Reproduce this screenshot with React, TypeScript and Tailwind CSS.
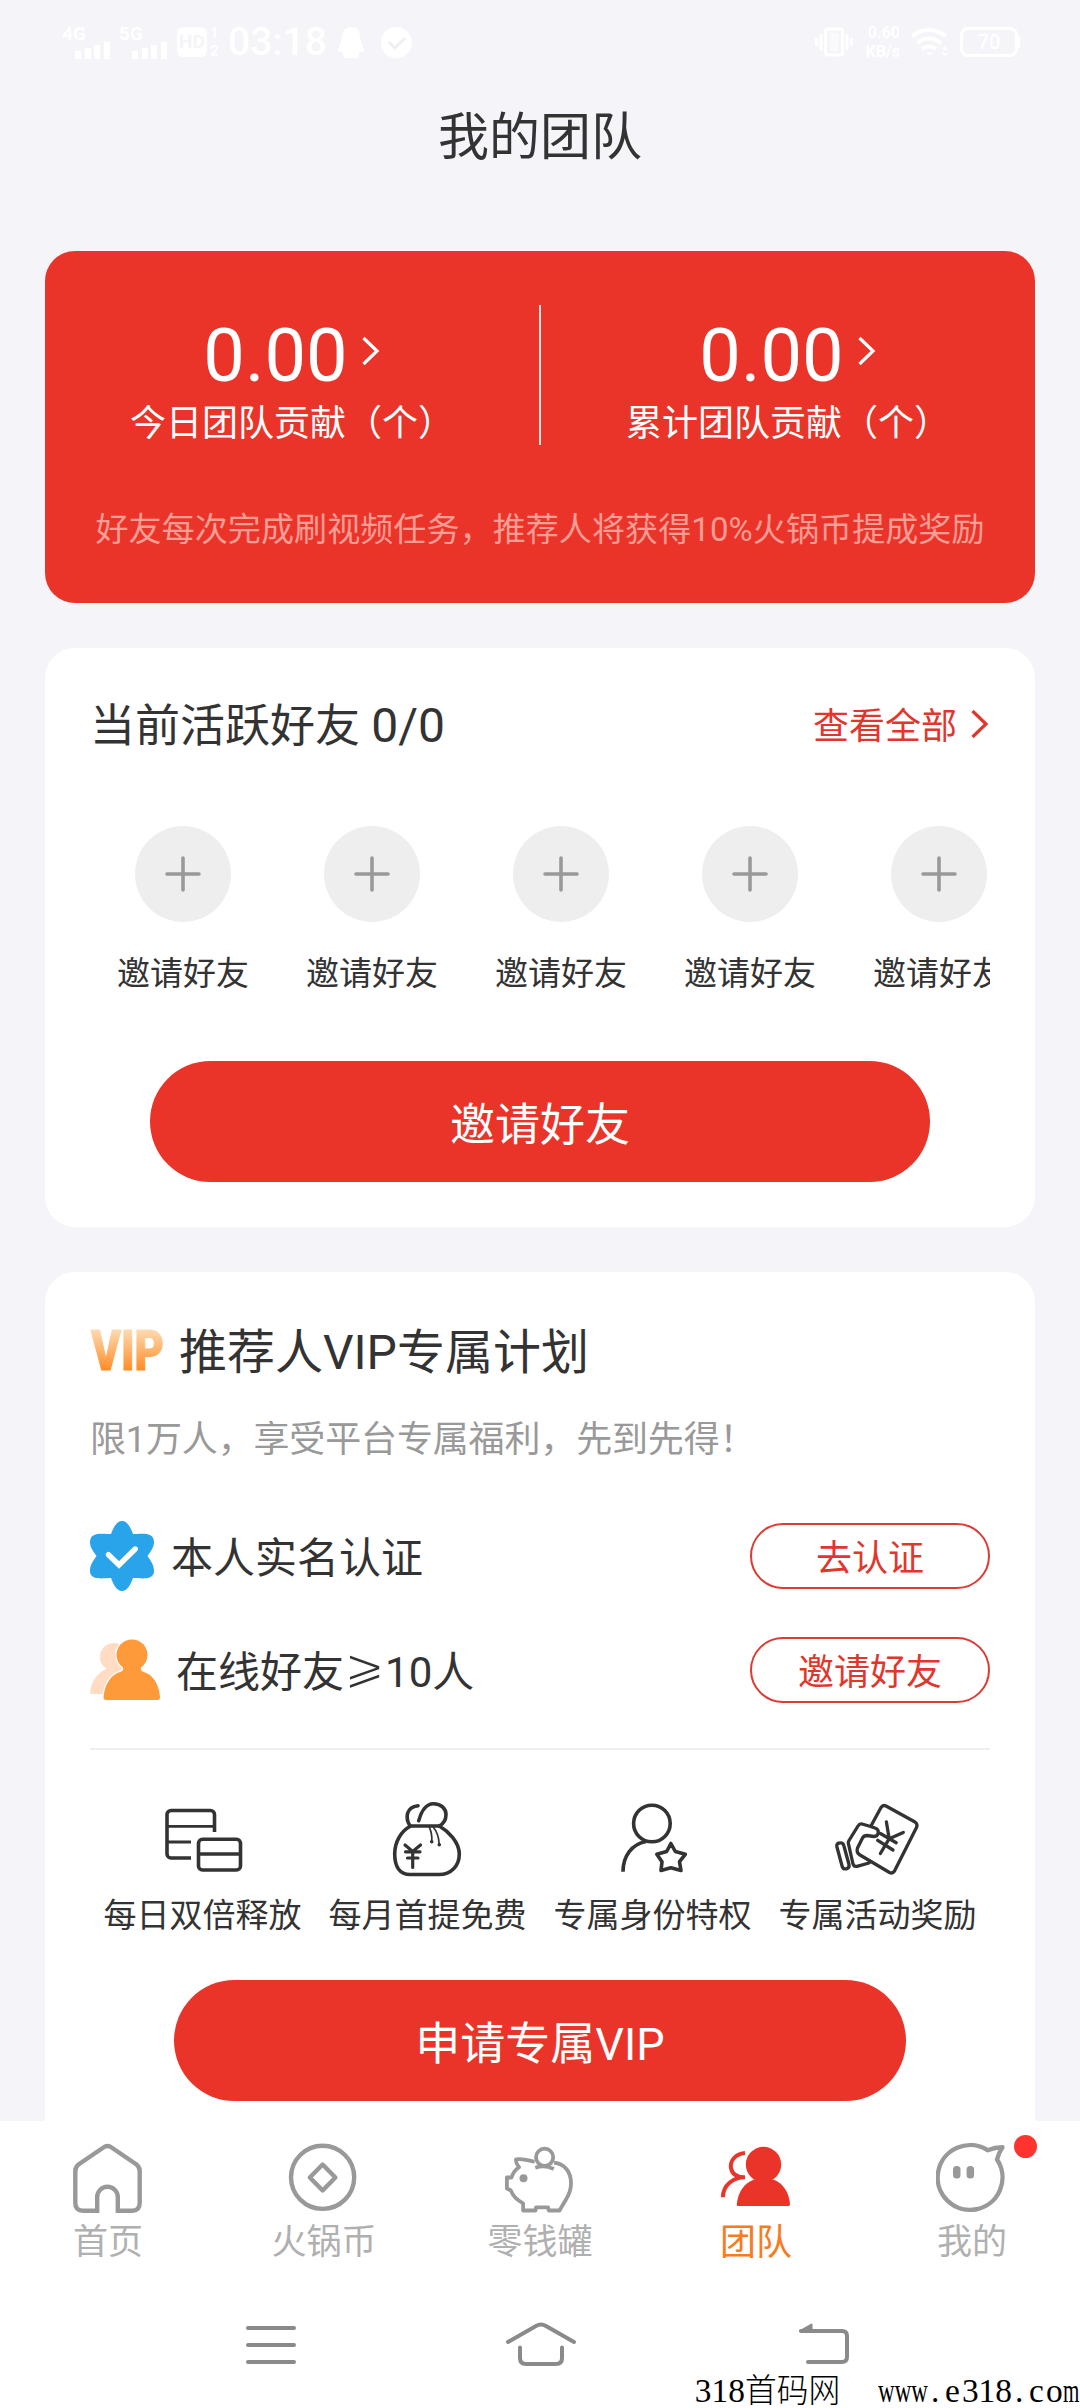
import type { ReactNode } from "react";

const FRIEND_SLOTS = [1, 2, 3, 4, 5];

const STATS = [
  { value: "0.00", label: "今日团队贡献（个）" },
  { value: "0.00", label: "累计团队贡献（个）" },
];

const PERKS = [
  { label: "每日双倍释放", icon: <ReleaseIcon /> },
  { label: "每月首提免费", icon: <MoneyBagIcon /> },
  { label: "专属身份特权", icon: <IdentityIcon /> },
  { label: "专属活动奖励", icon: <RewardIcon /> },
];

const TABS = [
  { label: "首页", icon: <HomeIcon /> },
  { label: "火锅币", icon: <CoinIcon /> },
  { label: "零钱罐", icon: <PiggyIcon /> },
  { label: "团队", icon: <TeamIcon />, active: true },
  { label: "我的", icon: <MineIcon />, dot: true },
];

function Chevron({ className }: { className?: string }) {
  return (
    <svg className={className} width="20" height="30" viewBox="0 0 20 30" fill="none" stroke="currentColor" strokeWidth="3.2">
      <path d="M2.5 2 16 15 2.5 28" />
    </svg>
  );
}

function ReleaseIcon() {
  return (
    <svg width="80" height="78" viewBox="-1 -6 80 78" fill="none" stroke="#333" strokeWidth="3.6">
      <path d="M50.5 26V8.5a4 4 0 0 0-4-4H7a4 4 0 0 0-4 4V48a4 4 0 0 0 4 4h20" />
      <path d="M3 20.3h47.5M3 36h24" strokeWidth="2.8" />
      <rect x="34.5" y="33.3" width="42" height="30.7" rx="4" />
      <path d="M34.5 48h42" />
    </svg>
  );
}

function MoneyBagIcon() {
  return (
    <svg width="73" height="78" viewBox="0 0 73 78" fill="none" stroke="#333" strokeWidth="3.6" strokeLinecap="round">
      <path d="M19.7 26C10 31 3.7 42 3.7 54C3.7 67 9 74.5 19 74.5H48C60 74.5 68.3 66 68.3 54C68.3 42 57 31 48.3 26Z" />
      <path d="M19 26C14 18 15 7 27 5.7" />
      <path d="M27.7 20.7C30 12 35 3.7 42.5 3.7C50 3.7 55 8.5 55 14.5C55 20 52 24 48.3 26" />
      <path d="M38.3 27.3Q41.5 34 40.7 41.7M42.3 27.3Q47.5 33 48.3 44.7" strokeWidth="1.7" />
      <circle cx="40.7" cy="41.7" r="1.8" fill="#333" stroke="none" />
      <circle cx="48.3" cy="44.7" r="1.8" fill="#333" stroke="none" />
      <path d="M14 45 21.7 51.5 29.5 45M21.7 51.5V67.5M14.5 51.8H29M16.5 58H27" strokeWidth="3.2" />
    </svg>
  );
}

function IdentityIcon() {
  return (
    <svg width="70" height="78" viewBox="-2 -2 70 78" fill="none" stroke="#333" strokeWidth="3.6" strokeLinejoin="round">
      <circle cx="31.9" cy="21.5" r="18.3" />
      <path d="M3 69.7C3 54 12 42 26 39.5" />
      <path d="M50.9 41.5 55.3 49.5 65.3 52.3 59.5 59.7 61 68.5 50.9 65.8 41 68.5 42 59.7 36.8 52.3 46.7 49.5Z" />
    </svg>
  );
}

function RewardIcon() {
  return (
    <svg width="87" height="78" viewBox="0 -2 87 78" fill="none" stroke="#333" strokeWidth="3.3" strokeLinecap="round" strokeLinejoin="round">
      <path d="M37.5 23 47 5.5Q49 2.5 52 4L81 20Q84 22 82.5 25.5L60.5 69Q58.5 72 55.5 70.5L26 53Q22 50.5 23.5 46L28.5 36Q30 33.5 33 33.5L40 34.5C45 34.5 46 27.5 41 26L35 24 28 22Q25.5 21.5 24 24L15 38.5Q14 40 14.5 42L19 62Q20 65 23 64.3L35 61" />
      <path d="M2.8 44.5Q2.3 41.5 5.5 41Q9 40.3 9.8 43.5L15 62.5Q15.6 66 12.5 66.8Q9 67.5 8.2 64.5Z" />
      <path d="M52.4 20 55.2 36.7 69.3 30.5M55.2 36.7 46.4 51.5M46.4 31.5 62.2 40.7M43.7 38.3 59 48" />
    </svg>
  );
}

function HomeIcon() {
  return (
    <svg width="72" height="74" viewBox="0 0 72 74" fill="none" stroke="#999" strokeWidth="4.4">
      <path d="M25.2 68.7H11Q3.3 68.7 3.3 61V29Q3.3 25 6.5 22.5L32.5 4.8Q35.5 3 38.5 4.8L64.5 22.5Q67.7 25 67.7 29V61Q67.7 68.7 60 68.7H45.8V55A10.3 10.3 0 0 0 25.2 55Z" />
    </svg>
  );
}

function CoinIcon() {
  return (
    <svg width="72" height="74" viewBox="0 0 72 74" fill="none" stroke="#999" strokeWidth="4.4" strokeLinejoin="round">
      <circle cx="34.6" cy="35.3" r="31.6" />
      <path d="M34.6 22.5 47.4 35.5 34.6 48.5 21.8 35.5Z" />
    </svg>
  );
}

function PiggyIcon() {
  return (
    <svg width="72" height="74" viewBox="0 -2 72 74" fill="none" stroke="#999" strokeWidth="3.8" strokeLinejoin="round">
      <circle cx="40.6" cy="13.3" r="8.6" />
      <path d="M30.6 17.7C26 17.5 22 14 12 15.3C11.5 19 13 21 15 23.3C11 26 9 29 7.5 33.5H2.9V44.5L6.9 46.5C9 53 13 56 19.1 59.3V66.5H31.5L32 63.3H44L44.8 66.5H55.5L62 55.5C65.5 50 67 45 67 39.3C67 28 61 20 50 18.7" />
      <path d="M31.3 23.7Q40.6 20.5 49.8 25" />
      <circle cx="19.5" cy="34.3" r="4" fill="#999" stroke="none" />
    </svg>
  );
}

function TeamIcon() {
  return (
    <svg width="72" height="74" viewBox="0 -2 72 74" fill="none">
      <path d="M25 9C14 10 10 18 11 24C12 30 17 33.3 25 33.3C13 33.5 3 41 2.9 53.3" stroke="#eb3429" strokeWidth="4" />
      <circle cx="43.5" cy="20.5" r="17.7" fill="#eb3429" />
      <path d="M18 62Q16.6 62 16.8 60C18 48 24 39.5 34 35.5H53.5C63 39.5 69 48 70 60Q70 62 68.5 62Z" fill="#eb3429" />
    </svg>
  );
}

function MineIcon() {
  return (
    <svg width="72" height="74" viewBox="0 0 72 74" fill="none" stroke="#999" strokeWidth="4.4" strokeLinejoin="round">
      <path d="M60.8 17.5A32.4 32.4 0 1 1 51.5 8.2Q59 5.2 66.5 5.2Q62.5 11 60.8 17.5Z" stroke="none" />
      <path d="M61 17.5A32.4 32.4 0 1 1 51.5 8.2Q59 5.2 66.5 5.2Q62.500 11 61 17.5L63 21" />
      <g fill="#999" stroke="none">
        <rect x="17" y="24" width="7.5" height="12.6" rx="3.5" />
        <rect x="30.6" y="24" width="7.5" height="12.6" rx="3.5" />
      </g>
    </svg>
  );
}

function VerifiedIcon() {
  return (
    <svg width="64" height="72" viewBox="0 0 64 72" fill="none">
      <path
        d="M32 1C37 1 40.5 7 43 14C50 14 64 11 64 22C64 28 60 32 57.5 36C60 40 64 44 64 51C64 61 50 58 43 58C40.5 65 37 71 32 71C27 71 23.5 65 21 58C14 58 0 61 0 51C0 44 4 40 6.5 36C4 32 0 28 0 22C0 11 14 14 21 14C23.5 7 27 1 32 1Z"
        fill="#29a4ea"
      />
      <path d="M18.5 34.7 29 45 45.2 29" stroke="#fff" strokeWidth="5.4" strokeLinecap="round" />
    </svg>
  );
}

function FriendsIcon() {
  return (
    <svg width="71" height="66" viewBox="0 0 71 66">
      <g fill="#ffdcc3">
        <circle cx="24" cy="20" r="14" />
        <path d="M0 55C1 45 7 36 16 32L32 30 20 57H2Q0 57 0 55Z" />
      </g>
      <path
        d="M33 30.5A15.5 15.5 0 1 1 51 30.5Q50 34 54 35C63 38 69 47 70 60Q70 63 68 63H16Q13.5 63 13.5 60C15 46 21 38 30 35Q34 34 33 30.5Z"
        fill="#ff9a3a"
        stroke="#fff"
        strokeWidth="2.5"
        paintOrder="stroke"
      />
    </svg>
  );
}

function VipMark() {
  return (
    <svg width="75" height="60" viewBox="0 0 75 60">
      <defs>
        <linearGradient id="vip" x1="0" y1="6" x2="0" y2="48" gradientUnits="userSpaceOnUse">
          <stop offset="0" stopColor="#fddcb4" />
          <stop offset="1" stopColor="#ff8a24" />
        </linearGradient>
      </defs>
      <text
        x="1"
        y="47"
        fontSize="56"
        fontFamily="Roboto, sans-serif"
        fontWeight="900"
        fill="url(#vip)"
        stroke="url(#vip)"
        strokeWidth="1.2"
        textLength="73"
        lengthAdjust="spacingAndGlyphs"
      >
        VIP
      </text>
    </svg>
  );
}

function SignalBars() {
  return (
    <svg width="35" height="17" viewBox="0 0 35 17" fill="#fff">
      <path d="M0 9h6v8H0zM10 6h6v11h-6zM19 3h6v14h-6zM29 0h6v17h-6z" />
    </svg>
  );
}

function Signal({ label }: { label: string }) {
  return (
    <div className="flex w-[57px] flex-col">
      <span className="text-[19px] font-bold leading-[16px]">{label}</span>
      <div className="pl-[13px]">
        <SignalBars />
      </div>
    </div>
  );
}

function StatusBar() {
  return (
    <header className="flex h-[84px] items-center pl-[62px] pr-[60px] text-white">
      <Signal label="4G" />
      <Signal label="5G" />
      <div className="ml-[1px] flex h-[30px] w-[30px] items-center justify-center rounded-md bg-white text-[19px] font-bold text-[#f4f4f9]">
        HD
      </div>
      <div className="ml-[3px] flex w-[10px] flex-col text-[15px] font-bold leading-[18px]">
        <span>1</span>
        <span>2</span>
      </div>
      <span className="ml-[8px] w-[98px] text-[39px] font-medium leading-none">03:18</span>
      <svg className="ml-[12px]" width="26" height="31" viewBox="0 0 26 31" fill="#fff">
        <path d="M13 0C19 0 22 4 22 10C22 15 26 19 26 25Q24 26 22 24L20 31H6L4 24Q2 26 0 25C0 19 4 15 4 10C4 4 7 0 13 0Z" />
      </svg>
      <svg className="ml-[17px]" width="31" height="31" viewBox="0 0 31 31">
        <circle cx="15.5" cy="15.5" r="15.5" fill="#fff" />
        <path d="M8 15l6 6 10-10" fill="none" stroke="#f0f0f4" strokeWidth="3" />
      </svg>
      <svg className="ml-auto" width="38" height="30" viewBox="0 0 38 30" fill="none" stroke="#fff" strokeWidth="3">
        <rect x="10.5" y="2" width="17" height="26" rx="2" />
        <path d="M6 7v16M1.5 11v8M32 7v16M36.5 11v8" />
        <rect x="14.5" y="6" width="9" height="18" fill="#fafafd" stroke="none" />
      </svg>
      <div className="ml-[7px] flex w-[40px] flex-col items-end text-[16px] font-bold leading-[19px]">
        <span>0.60</span>
        <span>KB/s</span>
      </div>
      <svg className="ml-[11px]" width="38" height="30" viewBox="0 0 38 30" fill="none" stroke="#fff" strokeWidth="4">
        <path d="M1 9Q18 -3 35 9M6 16Q18 7 30 16M11 22Q18 17 25 22" />
        <path d="M15 25h7l-3.5 4zM31 23l3-4 3 4zM31 26h6l-3 4z" fill="#fff" stroke="none" />
      </svg>
      <div className="ml-[11px] flex h-[30px] w-[58px] items-center justify-center rounded-lg border-[3px] border-white text-[20px] font-medium">
        70
      </div>
      <div className="h-[12px] w-[2px] bg-white" />
    </header>
  );
}

function StatsCard() {
  return (
    <section className="h-[352px] shrink-0 rounded-[30px] bg-[#eb3429] pt-[54px] text-white">
      <div className="flex h-[140px]">
        {STATS.map((stat, i) => (
          <div key={stat.label} className={i === 1 ? "flex-1 border-l-2 border-white/85 pt-[11px]" : "flex-1 pt-[11px]"}>
            <div className="flex h-[80px] items-center justify-center gap-[13px]">
              <span className="text-[74px] leading-[80px]">{stat.value}</span>
              <Chevron className="mb-[11px]" />
            </div>
            <p className="mt-[2px] text-center text-[36px] leading-[52px]">{stat.label}</p>
          </div>
        ))}
      </div>
      <p className="mt-[61px] whitespace-nowrap text-center text-[33px] leading-[48px] tracking-[0.1px] text-[#fa9d94]">
        好友每次完成刷视频任务，推荐人将获得10%火锅币提成奖励
      </p>
    </section>
  );
}

function FriendsCard() {
  return (
    <section className="h-[579px] shrink-0 rounded-[30px] bg-white px-[45px] pt-[49px]">
      <div className="flex h-[60px] items-center justify-between">
        <h2 className="text-[45px] leading-[60px]">
          当前活跃好友 <span className="text-[48px] leading-none">0/0</span>
        </h2>
        <div className="flex items-center gap-[13px] text-[#e2362d]">
          <span className="text-[36px] leading-[56px]">查看全部</span>
          <Chevron className="mb-[6px]" />
        </div>
      </div>
      <div className="mt-[69px] flex gap-[57px] overflow-hidden pl-[27px]">
        {FRIEND_SLOTS.map((slot) => (
          <div key={slot} className="flex w-[132px] shrink-0 flex-col items-center">
            <div className="flex h-[96px] w-[96px] items-center justify-center rounded-full bg-[#eee]">
              <svg width="36" height="36" viewBox="0 0 36 36" stroke="#999" strokeWidth="3.6" strokeLinecap="round">
                <path d="M18 2v32M2 18h32" />
              </svg>
            </div>
            <span className="mt-[28px] whitespace-nowrap text-[33px] leading-[48px]">邀请好友</span>
          </div>
        ))}
      </div>
      <button className="mx-auto mt-[63px] flex h-[121px] w-[780px] items-center justify-center rounded-full bg-[#eb3429] pt-[8px] text-[45px] text-white">
        邀请好友
      </button>
    </section>
  );
}

function TaskRow({ icon, label, action, className }: { icon: ReactNode; label: ReactNode; action: string; className: string }) {
  return (
    <div className={className}>
      {icon}
      <span className="flex whitespace-nowrap pt-[5px] text-[42px] leading-[60px]">{label}</span>
      <button className="ml-auto flex h-[66px] w-[240px] items-center justify-center rounded-full border-2 border-[#dd3b34] pt-[5px] text-[36px] text-[#e2362d]">
        {action}
      </button>
    </div>
  );
}

function VipCard() {
  return (
    <section className="h-[900px] shrink-0 rounded-[30px] bg-white px-[45px] pt-[51px]">
      <div className="flex h-[60px] items-center gap-[14px]">
        <VipMark />
        <h2 className="text-[48px] leading-[60px]">推荐人VIP专属计划</h2>
      </div>
      <p className="mt-[32px] text-[36px] leading-[50px] tracking-[-0.15px] text-[#999]">
        限1万人，享受平台专属福利，先到先得！
      </p>

      <TaskRow
        className="mt-[58px] flex h-[66px] items-center gap-[17px]"
        icon={<VerifiedIcon />}
        label="本人实名认证"
        action="去认证"
      />
      <TaskRow
        className="mt-[48px] flex h-[66px] items-center gap-[15px]"
        icon={<FriendsIcon />}
        label={
          <>
            在线好友
            <span className="text-[49px] leading-[47px] [-webkit-text-stroke:1.4px_white]">⩾</span>
            10人
          </>
        }
        action="邀请好友"
      />

      <div className="mt-[45px] h-[2px] bg-[#eee]" />

      <div className="mt-[50px] grid grid-cols-4">
        {PERKS.map((perk) => (
          <div key={perk.label} className="flex flex-col items-center">
            {perk.icon}
            <span className="mt-[18px] whitespace-nowrap text-[33px] leading-[40px]">{perk.label}</span>
          </div>
        ))}
      </div>

      <button className="mx-auto mt-[44px] flex h-[121px] w-[732px] items-center justify-center rounded-full bg-[#eb3429] pt-[8px] text-[45px] text-white">
        申请专属VIP
      </button>
    </section>
  );
}

function TabBar() {
  return (
    <nav className="grid h-[199px] shrink-0 grid-cols-5 bg-white pt-[21px]">
      {TABS.map((tab) => (
        <div key={tab.label} className="flex flex-col items-center">
          <div className="relative">
            {tab.icon}
            {tab.dot && <span className="absolute -top-[7px] left-[78px] h-[23px] w-[23px] rounded-full bg-[#ff3430]" />}
          </div>
          <span className={tab.active ? "mt-[5px] text-[36px] leading-[44px] text-[#fa7a1e]" : "mt-[5px] text-[35px] leading-[44px] text-[#b0b0b0]"}>
            {tab.label}
          </span>
        </div>
      ))}
    </nav>
  );
}

function SystemNav() {
  return (
    <div className="flex h-[50px] shrink-0 bg-white pl-[244px]">
      <svg width="54" height="48" viewBox="0 0 54 48" stroke="#8a8a8a" strokeWidth="4" strokeLinecap="round">
        <path d="M4 8h46M4 25h46M4 42h46" />
      </svg>
      <svg className="ml-[206px]" width="74" height="48" viewBox="0 0 74 48" fill="none" stroke="#8a8a8a" strokeWidth="4" strokeLinecap="round">
        <path d="M4 22 32 6Q37 3 42 6L70 22M16 27.5V38Q16 44 22 44H52Q58 44 58 38V27.5" />
      </svg>
      <svg className="ml-[218px]" width="56" height="48" viewBox="0 0 56 48" fill="none" stroke="#8a8a8a" strokeWidth="4" strokeLinecap="round">
        <path d="M12 42H46Q51 42 51 37V16Q51 11 46 11H5" />
        <path d="M4 11 15.5 4.5V11Z" fill="#8a8a8a" strokeWidth="2" strokeLinejoin="round" />
      </svg>
    </div>
  );
}

// Site mark in half-width cells, wide letters are squeezed into one cell each
function Watermark() {
  return (
    <div className="flex h-[38px] shrink-0 items-end justify-end whitespace-pre bg-white font-['Liberation_Serif','Noto_Sans_CJK_SC',serif] text-[33.4px] leading-[34px] text-black">
      <span>318</span>
      <span className="w-[100px] origin-left scale-x-[0.95] font-light">首码网</span>
      <span className="w-[33px]" />
      <span className="w-[50px] origin-left scale-x-[0.69]">www</span>
      <span className="w-[17px] pl-[3px]">.</span>
      <span className="w-[17px]">e</span>
      <span>318</span>
      <span className="w-[17px] pl-[3px]">.</span>
      <span className="w-[17px]">c</span>
      <span className="w-[17px]">o</span>
      <span className="w-[17px] origin-left scale-x-[0.63]">m</span>
    </div>
  );
}

export default function App() {
  return (
    <div className="flex h-[2408px] w-[1080px] flex-col overflow-hidden bg-[#f4f4f9] font-['Roboto','Noto_Sans_CJK_SC','DejaVu_Sans',sans-serif] text-[#333]">
      <StatusBar />
      <h1 className="h-[104px] shrink-0 text-center text-[51px] leading-[107px]">我的团队</h1>
      <main className="flex min-h-0 flex-1 flex-col gap-[45px] overflow-hidden px-[45px] pt-[63px]">
        <StatsCard />
        <FriendsCard />
        <VipCard />
      </main>
      <TabBar />
      <SystemNav />
      <Watermark />
    </div>
  );
}
